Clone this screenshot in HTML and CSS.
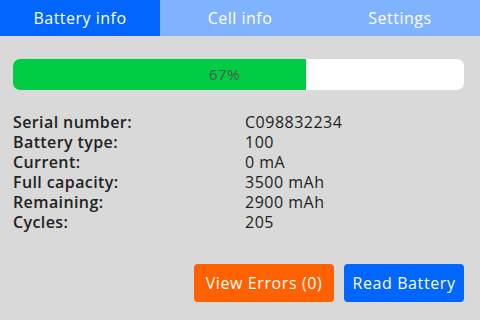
FILE: index.html
```
<!DOCTYPE html>
<html>
<head>
<meta charset="utf-8">
<link rel="stylesheet" href="styles.css">
</head>
<body>
<div class="screen">
  <div class="tabs">
    <div class="tab active">Battery info</div>
    <div class="tab">Cell info</div>
    <div class="tab">Settings</div>
  </div>
  <div class="content">
    <div class="bar">
      <div class="fill" style="width:65%"></div>
      <div class="pct">67%</div>
    </div>
    <div class="info">
      <div class="k">Serial number:</div><div class="v">C098832234</div>
      <div class="k">Battery type:</div><div class="v">100</div>
      <div class="k">Current:</div><div class="v">0 mA</div>
      <div class="k">Full capacity:</div><div class="v">3500 mAh</div>
      <div class="k">Remaining:</div><div class="v">2900 mAh</div>
      <div class="k">Cycles:</div><div class="v">205</div>
    </div>
    <div class="actions">
      <div class="btn orange">View Errors (0)</div>
      <div class="btn blue">Read Battery</div>
    </div>
  </div>
</div>
</body>
</html>
```
FILE: styles.css
```
html, body { margin: 0; padding: 0; }
body {
  width: 480px; height: 320px; overflow: hidden;
  background: #d9d9d9;
  font-family: "Open Sans", "DejaVu Sans", sans-serif;
  font-size: 16px;
}
.screen { width: 480px; height: 320px; display: flex; flex-direction: column; }
.tabs { display: flex; height: 36px; }
.tab {
  flex: 1; display: flex; align-items: center; justify-content: center;
  background: #80b3ff; color: #fff; font-size: 16px; letter-spacing: 0.5px;
}
.tab.active { background: #0066ff; }
.content { padding: 23px 16px 18px 13px; display: flex; flex-direction: column; flex: 1; }
.bar {
  position: relative; height: 31px; background: #fff; border-radius: 7px; overflow: hidden;
}
.fill { height: 100%; background: #00cc44; }
.pct {
  position: absolute; top: 0; left: 196px; height: 31px; line-height: 31px;
  color: #555; font-size: 15px; letter-spacing: 0.5px;
}
.info {
  margin-top: 22px;
  display: grid; grid-template-columns: 232px 1fr;
  line-height: 20px; font-size: 16px; color: #222; letter-spacing: 0.4px;
}
.k { font-weight: 600; }
.v { letter-spacing: 0.5px; }
.actions { margin-top: auto; display: flex; justify-content: flex-end; gap: 10px; }
.btn {
  height: 38px; border-radius: 4px; color: #fff; display: flex; align-items: center; justify-content: center;
  font-size: 16px; letter-spacing: 0.6px;
}
.orange { background: #ff6000; width: 140px; }
.blue { background: #0066ff; width: 120px; }
```
